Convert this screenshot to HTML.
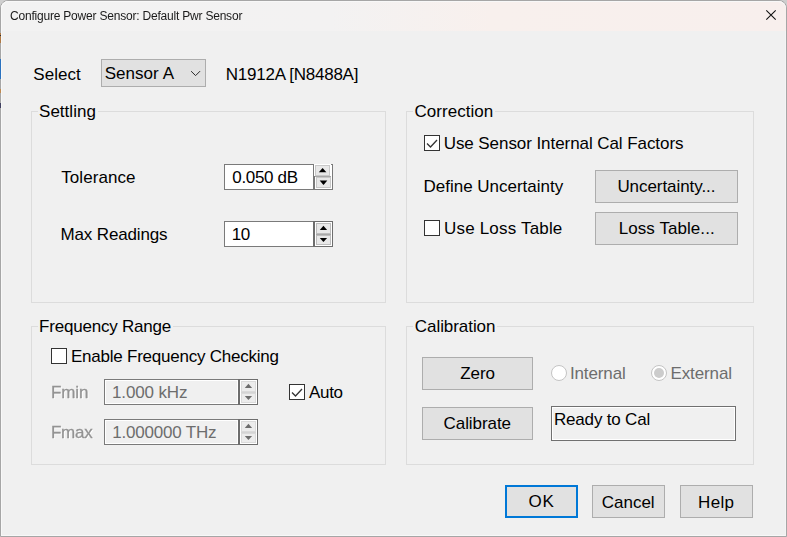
<!DOCTYPE html>
<html><head><meta charset="utf-8">
<style>
*{box-sizing:border-box;margin:0;padding:0}
html,body{width:787px;height:537px;overflow:hidden;background:#cfcfcf}
body{position:relative;font-family:"Liberation Sans",sans-serif;color:#000}
div,svg{position:absolute}
#win{left:0;top:0;width:787px;height:537px;background:#f0f0f0;border:1px solid #a6a6a6;border-radius:8px 8px 0 0;box-shadow:inset 1px 0 #f8f8f8,inset -1px 0 #f4f4f4,inset 0 -1px #f8f8f8}
#tb{left:1px;top:1px;width:785px;height:30px;background:linear-gradient(90deg,#f2f2f2 0px,#f3f2f2 330px,#f8f0ed 490px,#f8efed 785px);border-radius:8px 8px 0 0;box-shadow:inset 0 1px #f8f8f8,inset 1px 0 #f8f8f8}
.t{white-space:nowrap;font-size:17px;line-height:22px}
.grp{border:1px solid #dcdcdc}
.btn{background:#e1e1e1;border:1px solid #adadad}
.edit{background:#fff;border:1px solid #7a7a7a}
.cb{width:16px;height:16px;border:1px solid #333;background:#fff}
.rad{width:16px;height:16px;border:1px solid #c4c4c4;border-radius:50%;background:#fff}
.d1{color:#6d6d6d}
.d2{color:#939393;text-shadow:1px 1px 0 #fff;will-change:transform;-webkit-text-stroke:0.3px #939393}
</style></head><body>
<div id="win"></div><div id="tb"></div>
<div style="left:0;top:33px;width:1px;height:10px;background:#b07a45"></div>
<div style="left:0;top:35px;width:1px;height:1px;background:#303030"></div>
<div style="left:0;top:59px;width:1px;height:20px;background:#2a72bf"></div>
<div style="left:0;top:89px;width:1px;height:4px;background:#c08a50"></div>
<div style="left:0;top:103px;width:1px;height:5px;background:#404060"></div>
<svg style="left:765px;top:9px" width="12" height="12" viewBox="0 0 12 12"><path d="M1.3 1.3L10.7 10.7M10.7 1.3L1.3 10.7" stroke="#111" stroke-width="1.1"/></svg>
<div class="btn" style="left:101px;top:59px;width:105px;height:28px;"></div>
<svg style="left:190px;top:70px" width="12" height="8" viewBox="0 0 12 8"><path d="M1.1 1.2L5.6 5.6L10.1 1.1" stroke="#2a2a2a" stroke-width="1" fill="none"/></svg>
<div class="grp" style="left:31px;top:111px;width:355px;height:192px;"></div>
<div style="left:38px;top:109px;width:60px;height:6px;background:#f0f0f0"></div>
<div class="grp" style="left:406px;top:111px;width:348px;height:192px;"></div>
<div style="left:413px;top:109px;width:82px;height:6px;background:#f0f0f0"></div>
<div class="grp" style="left:31px;top:326px;width:355px;height:139px;"></div>
<div style="left:38px;top:324px;width:135px;height:6px;background:#f0f0f0"></div>
<div class="grp" style="left:406px;top:326px;width:348px;height:139px;"></div>
<div style="left:413px;top:324px;width:84px;height:6px;background:#f0f0f0"></div>
<div class="edit" style="left:224px;top:164px;width:90px;height:26px;"></div>
<svg style="left:313px;top:164px" width="20" height="26" viewBox="0 0 20 26" shape-rendering="crispEdges"><rect x="0" y="0" width="20" height="26" fill="#fff"/><rect x="0" y="0" width="1" height="26" fill="#7a7a7a"/><rect x="0" y="12" width="2" height="14" fill="#7a7a7a"/><rect x="19" y="0" width="1" height="26" fill="#7a7a7a"/><rect x="18" y="0" width="1" height="1" fill="#7a7a7a"/><rect x="0" y="25" width="20" height="1" fill="#7a7a7a"/><rect x="2" y="1" width="15" height="11" fill="#c8c8c8"/><rect x="3" y="2" width="13" height="9" fill="#e8e8e8"/><rect x="2" y="12" width="16" height="1" fill="#a8a8a8"/><rect x="3" y="13" width="15" height="11" fill="#c8c8c8"/><rect x="4" y="14" width="13" height="9" fill="#e8e8e8"/><polygon shape-rendering="auto" points="5.8,8.3 13.4,8.3 9.6,3.9" fill="#000"/><polygon shape-rendering="auto" points="6.7,16.6 14.3,16.6 10.5,21" fill="#000"/></svg>
<div class="edit" style="left:224px;top:221px;width:90px;height:26px;"></div>
<svg style="left:313px;top:221px" width="20" height="26" viewBox="0 0 20 26" shape-rendering="crispEdges"><rect x="0" y="0" width="20" height="26" fill="#6d6d6d"/><rect x="1" y="1" width="18" height="24" fill="#fff"/><rect x="0" y="0" width="2" height="26" fill="#6d6d6d"/><rect x="3" y="2" width="15" height="11" fill="#bdbdbd"/><rect x="4" y="3" width="13" height="9" fill="#e8e8e8"/><rect x="3" y="13" width="15" height="1" fill="#a8a8a8"/><rect x="3" y="14" width="15" height="10" fill="#bdbdbd"/><rect x="4" y="15" width="13" height="8" fill="#e8e8e8"/><polygon shape-rendering="auto" points="6.8,9 14.1,9 10.45,4.7" fill="#000"/><polygon shape-rendering="auto" points="6.8,17 14.1,17 10.45,21.1" fill="#000"/></svg>
<div class="cb" style="left:424px;top:135px"></div><svg style="left:424px;top:135px" width="16" height="16" viewBox="0 0 16 16"><path d="M3 8.5L6.5 12L13 5" stroke="#333" stroke-width="1.3" fill="none"/></svg>
<div class="btn" style="left:595px;top:170px;width:143px;height:33px;"></div>
<div class="cb" style="left:424px;top:220px"></div>
<div class="btn" style="left:595px;top:212px;width:143px;height:33px;"></div>
<div class="cb" style="left:51px;top:348px"></div>
<div class="edit" style="left:104px;top:379px;width:135px;height:26px;background:#f0f0f0;box-shadow:inset 0 0 0 1px #fff"></div>
<svg style="left:238px;top:379px" width="20" height="26" viewBox="0 0 20 26" shape-rendering="crispEdges"><rect x="0" y="0" width="20" height="26" fill="#6d6d6d"/><rect x="1" y="1" width="18" height="24" fill="#fff"/><rect x="0" y="0" width="2" height="26" fill="#6d6d6d"/><rect x="3" y="2" width="15" height="11" fill="#dadada"/><rect x="4" y="3" width="13" height="9" fill="#ececec"/><rect x="3" y="13" width="15" height="1" fill="#d4d4d4"/><rect x="3" y="14" width="15" height="10" fill="#dadada"/><rect x="4" y="15" width="13" height="8" fill="#ececec"/><polygon shape-rendering="auto" points="6.8,9 14.1,9 10.45,4.7" fill="#6d6d6d"/><polygon shape-rendering="auto" points="6.8,17 14.1,17 10.45,21.1" fill="#6d6d6d"/></svg>
<div class="cb" style="left:289px;top:384px"></div><svg style="left:289px;top:384px" width="16" height="16" viewBox="0 0 16 16"><path d="M3 8.5L6.5 12L13 5" stroke="#333" stroke-width="1.3" fill="none"/></svg>
<div class="edit" style="left:104px;top:419px;width:135px;height:26px;background:#f0f0f0;box-shadow:inset 0 0 0 1px #fff"></div>
<svg style="left:238px;top:419px" width="20" height="26" viewBox="0 0 20 26" shape-rendering="crispEdges"><rect x="0" y="0" width="20" height="26" fill="#6d6d6d"/><rect x="1" y="1" width="18" height="24" fill="#fff"/><rect x="0" y="0" width="2" height="26" fill="#6d6d6d"/><rect x="3" y="2" width="15" height="11" fill="#dadada"/><rect x="4" y="3" width="13" height="9" fill="#ececec"/><rect x="3" y="13" width="15" height="1" fill="#d4d4d4"/><rect x="3" y="14" width="15" height="10" fill="#dadada"/><rect x="4" y="15" width="13" height="8" fill="#ececec"/><polygon shape-rendering="auto" points="6.8,9 14.1,9 10.45,4.7" fill="#6d6d6d"/><polygon shape-rendering="auto" points="6.8,17 14.1,17 10.45,21.1" fill="#6d6d6d"/></svg>
<div class="btn" style="left:422px;top:357px;width:111px;height:33px;"></div>
<div class="rad" style="left:551px;top:365px"></div>
<div class="rad" style="left:651px;top:365px"></div><div style="left:654px;top:368px;width:10px;height:10px;border-radius:50%;background:#ccc"></div>
<div class="btn" style="left:422px;top:407px;width:111px;height:33px;"></div>
<div class="edit" style="left:551px;top:406px;width:185px;height:35px;background:#f0f0f0;border-color:#707070;box-shadow:inset 0 0 0 1px #fff"></div>
<div class="btn" style="left:505px;top:485px;width:73px;height:33px;border:2px solid #0078d7"></div>
<div class="btn" style="left:592px;top:485px;width:73px;height:33px;"></div>
<div class="btn" style="left:680px;top:485px;width:73px;height:33px;"></div>
<div id="title" class="t " style="left:9.84px;top:9px;letter-spacing:-0.205px;font-size:12px;line-height:14px;color:#1a1a1a;will-change:transform">Configure Power Sensor: Default Pwr Sensor</div>
<div id="Select" class="t " style="left:33.36px;top:64px;letter-spacing:-0.0px;">Select</div>
<div id="SensorA" class="t " style="left:104.68px;top:63px;letter-spacing:0.046px;">Sensor A</div>
<div id="N1912A" class="t " style="left:225.84px;top:64px;letter-spacing:-0.251px;">N1912A [N8488A]</div>
<div id="Settling" class="t " style="left:39.04px;top:101px;letter-spacing:0.022px;">Settling</div>
<div id="Tolerance" class="t " style="left:61.16px;top:167px;letter-spacing:0.08px;">Tolerance</div>
<div id="tolval" class="t " style="left:232.32px;top:167px;letter-spacing:-0.342px;">0.050 dB</div>
<div id="MaxReadings" class="t " style="left:60.52px;top:224px;letter-spacing:-0.145px;">Max Readings</div>
<div id="ten" class="t " style="left:231.68px;top:224px;letter-spacing:-0.48px;">10</div>
<div id="Correction" class="t " style="left:414.52px;top:101px;letter-spacing:0.035px;">Correction</div>
<div id="UseSensor" class="t " style="left:443.68px;top:133px;letter-spacing:-0.069px;">Use Sensor Internal Cal Factors</div>
<div id="DefineU" class="t " style="left:423.52px;top:176px;letter-spacing:-0.009px;">Define Uncertainty</div>
<div id="UncBtn" class="t " style="left:617.4px;top:176px;letter-spacing:-0.061px;">Uncertainty...</div>
<div id="UseLoss" class="t " style="left:444.0px;top:218px;letter-spacing:0.185px;">Use Loss Table</div>
<div id="LossBtn" class="t " style="left:618.72px;top:218px;letter-spacing:0.067px;">Loss Table...</div>
<div id="FreqRange" class="t " style="left:39.04px;top:316px;letter-spacing:-0.206px;">Frequency Range</div>
<div id="Enable" class="t " style="left:71.0px;top:346px;letter-spacing:-0.233px;">Enable Frequency Checking</div>
<div id="Fmin" class="t d2" style="left:50.68px;top:382px;letter-spacing:-0.106px;">Fmin</div>
<div id="fminval" class="t d1" style="left:112.0px;top:382px;letter-spacing:-0.14px;">1.000 kHz</div>
<div id="Auto" class="t " style="left:309.0px;top:382px;letter-spacing:-0.32px;">Auto</div>
<div id="Fmax" class="t d2" style="left:50.68px;top:422px;letter-spacing:-0.267px;">Fmax</div>
<div id="fmaxval" class="t d1" style="left:112.32px;top:422px;letter-spacing:-0.205px;">1.000000 THz</div>
<div id="Calibration" class="t " style="left:414.84px;top:316px;letter-spacing:-0.064px;">Calibration</div>
<div id="Zero" class="t " style="left:460.2px;top:363px;letter-spacing:-0.054px;">Zero</div>
<div id="Internal" class="t d1" style="left:569.88px;top:363px;letter-spacing:-0.114px;">Internal</div>
<div id="External" class="t d1" style="left:670.4px;top:363px;letter-spacing:-0.092px;">External</div>
<div id="Calibrate" class="t " style="left:443.52px;top:413px;letter-spacing:-0.06px;">Calibrate</div>
<div id="Ready" class="t " style="left:554.0px;top:409px;letter-spacing:-0.189px;">Ready to Cal</div>
<div id="OK" class="t " style="left:528.4px;top:491px;letter-spacing:0.96px;">OK</div>
<div id="Cancel" class="t " style="left:601.72px;top:492px;letter-spacing:0.0px;">Cancel</div>
<div id="Help" class="t " style="left:698.08px;top:492px;letter-spacing:0.32px;">Help</div>
</body></html>
